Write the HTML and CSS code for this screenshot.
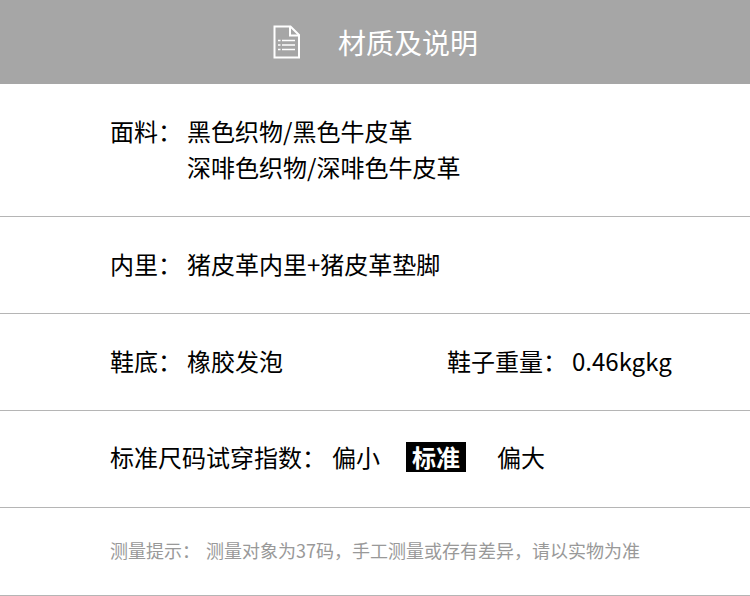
FILE: index.html
```
<!DOCTYPE html>
<html lang="zh-CN">
<head>
<meta charset="utf-8">
<title>材质及说明</title>
<link rel="stylesheet" href="styles.css">
</head>
<body>
<header class="head">
  <svg class="head-icon" width="28" height="34" viewBox="0 0 28 34" fill="none" stroke="#fff" stroke-width="2">
    <path d="M1.500 1.500h16l8.500 8.500v22.500h-24.500z"/>
    <path d="M17 1.500v9h9"/>
    <path d="M9 15.500h13M9 20h13M9 24.500h13" stroke-width="1.500"/>
    <path d="M5 15.500h2.500M5 20h2.500M5 24.500h2.500" stroke-width="1.500"/>
  </svg>
  <h1 class="head-title">材质及说明</h1>
</header>
<section class="row row-fabric">
  <span class="label">面料：</span>
  <div class="lines">
    <div>黑色织物/黑色牛皮革</div>
    <div>深啡色织物/深啡色牛皮革</div>
  </div>
</section>
<section class="row row-std">
  <span class="label">内里：</span>
  <span>猪皮革内里+猪皮革垫脚</span>
</section>
<section class="row row-std">
  <span class="label">鞋底：</span>
  <span class="sole">橡胶发泡</span>
  <span class="label-wide">鞋子重量：</span>
  <span>0.46kgkg</span>
</section>
<section class="row row-std row-fit">
  <span class="fit-label">标准尺码试穿指数：</span>
  <span class="fit">偏小</span>
  <span class="fit fit-on">标准</span>
  <span class="fit">偏大</span>
</section>
<section class="row row-note">
  <span class="note-label">测量提示：</span>
  <span>测量对象为37码，手工测量或存有差异，请以实物为准</span>
</section>
</body>
</html>
```
FILE: styles.css
```
html, body {
  margin: 0;
  padding: 0;
  background: #fff;
}
body {
  font-family: "Noto Sans CJK SC", "Noto Sans", sans-serif;
  font-size: 24px;
  color: #000;
  overflow: hidden;
}
.head {
  height: 84px;
  background: #a6a6a6;
  display: flex;
  align-items: center;
  padding-left: 273px;
  box-sizing: border-box;
}
.head-icon {
  flex: none;
  margin-right: 37px;
}
.head-title {
  margin: 0;
  font-size: 28px;
  font-weight: 400;
  color: #fff;
  line-height: 40px;
}
.row {
  display: flex;
  padding-left: 110px;
  border-bottom: 1px solid #b5b5b5;
  box-sizing: border-box;
  line-height: 36px;
  white-space: nowrap;
}
.row-fabric {
  height: 133px;
  padding-top: 29px;
}
.row-std {
  height: 97px;
  align-items: center;
  padding-bottom: 2px;
}
.row-fit {
  padding-bottom: 4px;
}
.label {
  width: 77px;
  flex: none;
}
.label-wide {
  width: 125px;
  flex: none;
}
.sole {
  width: 260px;
  flex: none;
}
.fit-label {
  width: 222px;
  flex: none;
}
.fit {
  width: 47px;
  margin-right: 27px;
  flex: none;
}
.fit-on {
  width: 60px;
  height: 30px;
  line-height: 30px;
  background: #000;
  color: #fff;
  font-weight: 700;
  text-align: center;
  margin-right: 31px;
}
.row-note {
  height: 88px;
  align-items: center;
  font-size: 18px;
  color: #999;
  padding-bottom: 4px;
}
.note-label {
  width: 96px;
  flex: none;
}
```
